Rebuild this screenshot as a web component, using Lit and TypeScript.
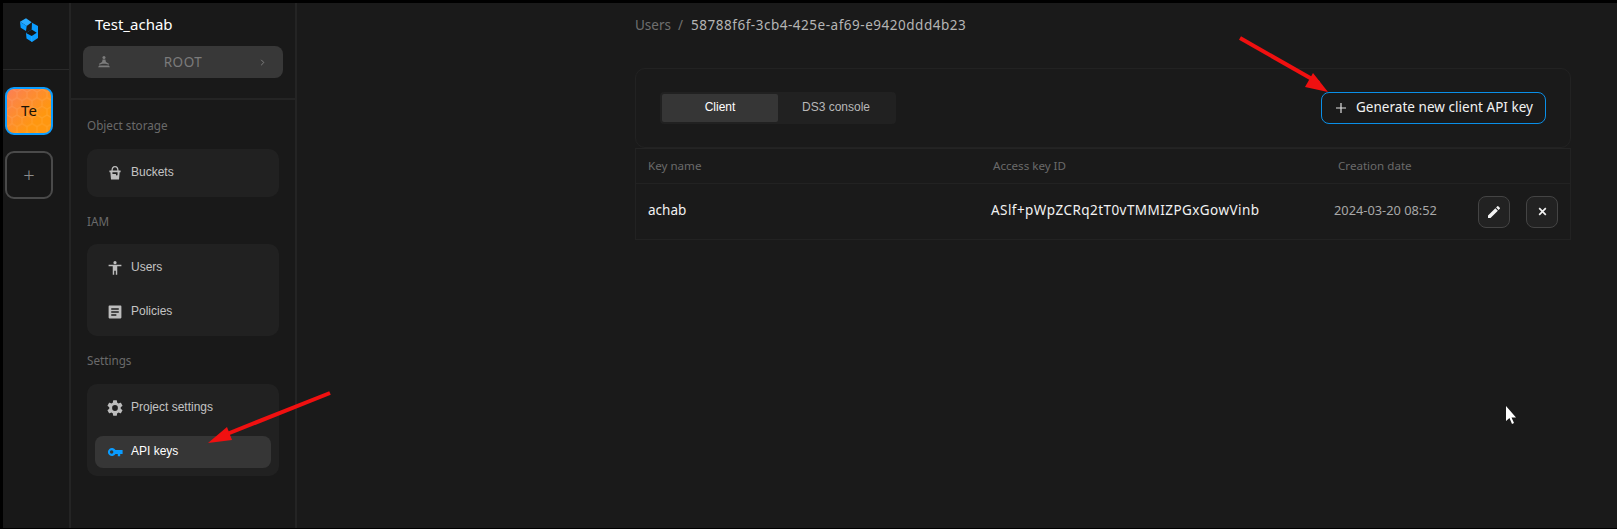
import {LitElement, html, css, svg} from 'lit';
import {customElement} from 'lit/decorators.js';

const icons = {
    bucket: svg`<path d="M6.300 7.500C6.300 3.800 8 2 10 2s3.700 1.800 3.700 5.500" fill="none" stroke="currentColor" stroke-width="1.600"/><path d="M3 6.800h14v2.200h-1.200l-.8 9h-10l-.8-9h-1.200z" fill="currentColor"/><path d="M6.800 9h6.400v3.200a1 1 0 0 1-2 0v-1h-4.400z" fill="#212121"/>`,
    user: svg`<circle cx="10" cy="3.400" r="2" fill="currentColor"/><path d="M2 6h16v1.900h-5.200v10.600h-1.800v-5.200h-2v5.200h-1.800v-10.600h-5.200z" fill="currentColor"/>`,
    policy: svg`<path d="M3 2h14a1 1 0 0 1 1 1v14a1 1 0 0 1-1 1h-14a1 1 0 0 1-1-1v-14a1 1 0 0 1 1-1zM5.300 5.300v1.800h9.400v-1.800zM5.300 9.100v1.800h9.400v-1.800zM5.300 12.900v1.800h6.400v-1.800z" fill="currentColor" fill-rule="evenodd"/>`,
    gear: svg`<path transform="translate(-2 -2)" d="M19.140 12.940c.04-.3.060-.61.060-.94s-.02-.64-.07-.94l2.030-1.580a.5.5 0 0 0 .12-.61l-1.920-3.320a.5.5 0 0 0-.59-.22l-2.390.96a7 7 0 0 0-1.620-.94l-.36-2.540a.48.480 0 0 0-.48-.41h-3.840a.48.480 0 0 0-.47.41l-.36 2.540c-.59.24-1.130.57-1.620.94l-2.390-.96a.49.49 0 0 0-.59.22l-1.920 3.320a.48.480 0 0 0 .12.61l2.030 1.580c-.05.3-.09.63-.09.94s.02.64.07.94l-2.030 1.580a.5.5 0 0 0-.12.61l1.920 3.320c.12.22.37.29.59.22l2.390-.96c.5.380 1.030.7 1.620.94l.36 2.540c.05.24.24.41.48.41h3.840c.24 0 .44-.17.47-.41l.36-2.540c.59-.24 1.130-.56 1.620-.94l2.390.96c.22.080.47 0 .59-.22l1.920-3.320a.48.480 0 0 0-.12-.61zM12 15.600a3.600 3.600 0 1 1 0-7.200 3.600 3.600 0 0 1 0 7.200z" fill="currentColor"/>`,
    key: svg`<path d="M10.600 7.400a5.100 5.100 0 1 0 0 5.200h2.900v2.600h3v-2.600h3v-5.200zM5.800 12.200a2.200 2.200 0 1 1 0-4.400 2.200 2.200 0 0 1 0 4.400z" fill="currentColor" fill-rule="evenodd"/>`,
    root: svg`<circle cx="10" cy="3.500" r="2.200" fill="currentColor"/><path d="M8 6.500h4l.8 3.500 4.200 2.500v1.500l-5-1.500h-4l-5 1.500v-1.500l4.200-2.500zM3 15h14l1.500 2.500h-17z" fill="currentColor"/>`,
    chevron: svg`<path d="M7 4l6 6-6 6" fill="none" stroke="currentColor" stroke-width="2"/>`,
    edit: svg`<path d="M3 17.250v3.750h3.750l11.060-11.060-3.750-3.750zM20.710 7.040a1 1 0 0 0 0-1.410l-2.340-2.340a1 1 0 0 0-1.410 0l-1.830 1.830 3.750 3.750z" fill="currentColor"/>`,
    close: svg`<path d="M4 4l12 12M16 4l-12 12" fill="none" stroke="currentColor" stroke-width="3"/>`,
};

@customElement('app-root')
class AppRoot extends LitElement {
    static styles = css`
    :host {
        display: block;
        position: relative;
        width: 1617px;
        height: 529px;
        box-sizing: border-box;
        padding: 3px 0 1px 3px;
        background: #000;
        overflow: hidden;
        font-family: "Noto Sans", sans-serif;
        color: #fff;
    }

    .page {
        display: flex;
        height: 100%;
        background: #1a1a1a;
    }

    .rail {
        width: 68px;
        flex: none;
        box-sizing: border-box;
        background: #181818;
        border-right: 2px solid #242424;
    }

    .logo {
        height: 67px;
        box-sizing: border-box;
        padding: 15px 0 0 17px;
        border-bottom: 1px solid #2a2a2a;
    }

    .logo svg { display: block; }

    .tile {
        position: relative;
        width: 48px;
        height: 48px;
        box-sizing: border-box;
        margin: 17px 0 0 2px;
        border-radius: 9px;
        display: flex;
        align-items: center;
        justify-content: center;
        overflow: hidden;
        font-size: 15px;
    }

    .tile span { position: relative; padding-bottom: 2px; }
    .tile svg { position: absolute; left: 0; top: 0; }

    .tile.project {
        border: 2px solid #0a9cff;
        background: linear-gradient(135deg, #fb7f56, #ff9710 70%);
        color: #1a1206;
    }

    .tile.add {
        margin-top: 16px;
        border: 2px solid #4a4a4a;
        color: #8c8c8c;
        font-size: 20px;
        font-weight: 300;
    }

    .side {
        width: 226px;
        flex: none;
        box-sizing: border-box;
        background: #191919;
        border-right: 2px solid #242424;
    }

    .side-head {
        height: 97px;
        box-sizing: border-box;
        padding: 11px 12px 0;
        border-bottom: 2px solid #242424;
    }

    .side-title {
        margin-left: 12px;
        height: 22px;
        line-height: 21px;
        font-size: 15px;
    }

    .root {
        margin-top: 10px;
        height: 32px;
        border-radius: 8px;
        background: #383838;
        display: flex;
        align-items: center;
        padding: 0 14px;
        color: #7b7b7b;
        font-size: 13.500px;
    }

    .root span { flex: 1; text-align: center; letter-spacing: .5px; }
    .root svg { width: 14px; height: 14px; flex: none; }
    .root svg.chevron { width: 9px; height: 9px; margin: 0 2px 0 3px; color: #858585; }

    .side-body { padding: 0 16px; }

    .group-label {
        height: 47px;
        line-height: 49px;
        font-size: 11.700px;
        color: #6a6a6a;
    }

    .group-label.first { height: 49px; line-height: 51px; }
    .group-label.last { height: 48px; line-height: 49px; }

    .card {
        display: flex;
        flex-direction: column;
        gap: 12px;
        background: #212121;
        border-radius: 10px;
        padding: 8px;
    }

    .item {
        height: 32px;
        display: flex;
        align-items: center;
        gap: 8px;
        padding-left: 12px;
        border-radius: 8px;
        font-family: "Liberation Sans", sans-serif;
        font-size: 12px;
        color: #c4c4c4;
    }

    .item span { padding-bottom: 2px; }
    .item svg { width: 16px; height: 16px; color: #bdbdbd; flex: none; }
    .item.active { background: #363636; color: #fff; }
    .item.active svg { color: #0a9cff; }

    .main {
        flex: 1;
        min-width: 0;
        padding: 0 46px 0 338px;
    }

    .crumbs {
        height: 44px;
        line-height: 44px;
        font-size: 13.500px;
        color: #b5b5b5;
    }

    .crumbs span { color: #6f6f6f; }
    .crumbs b { font-weight: 400; color: #6f6f6f; margin: 0 8px 0 7px; }
    .crumbs em { font-style: normal; letter-spacing: .52px; }

    .bar {
        margin-top: 21px;
        height: 80px;
        box-sizing: border-box;
        border: 1px solid #222;
        border-radius: 10px;
        padding: 0 24px;
        display: flex;
        align-items: center;
        justify-content: space-between;
    }

    .tabs {
        display: flex;
        padding: 2px;
        width: 236px;
        box-sizing: border-box;
        background: #212121;
        border-radius: 4px;
        font-family: "Liberation Sans", sans-serif;
        font-size: 12px;
    }

    .tabs div {
        width: 116px;
        height: 28px;
        line-height: 26px;
        text-align: center;
        color: #b8b8b8;
    }

    .tabs .on { background: #363636; color: #fff; border-radius: 2px; }

    .generate {
        width: 225px;
        height: 32px;
        box-sizing: border-box;
        border: 1px solid #0a8fe8;
        border-radius: 8px;
        display: flex;
        align-items: center;
        padding-left: 14px;
        gap: 10px;
        font-size: 13.500px;
        color: #f2f2f2;
    }

    .generate span { padding-bottom: 2px; letter-spacing: .03px; }
    .generate svg { flex: none; }

    .table {
        border: 1px solid #222;
        border-top: 1px solid #242424;
    }

    .row {
        display: grid;
        grid-template-columns: 345px 345px 1fr;
        align-items: center;
        padding-left: 12px;
    }

    .row.head {
        height: 35px;
        box-sizing: border-box;
        padding-bottom: 2px;
        border-bottom: 1px solid #222;
        font-size: 11.600px;
        color: #6a6a6a;
    }

    .row.data {
        height: 55px;
        font-size: 13.500px;
        color: #f2f2f2;
    }

    .name { padding-bottom: 4px; }
    .key { margin-left: -2px; padding-bottom: 4px; letter-spacing: .44px; }

    .date-cell {
        display: flex;
        align-items: center;
        margin-left: -4px;
        font-size: 12.800px;
        color: #a8a8a8;
    }

    .date-cell span { padding-bottom: 3px; }

    .actions { display: flex; gap: 16px; margin-left: auto; margin-right: 12px; }

    .btn {
        width: 32px;
        height: 32px;
        box-sizing: border-box;
        border: 1px solid #444;
        border-radius: 8px;
        background: #222;
        display: flex;
        align-items: center;
        justify-content: center;
        color: #f2f2f2;
    }

    .overlay {
        position: absolute;
        left: 0;
        top: 0;
        pointer-events: none;
    }
    `;

    private icon(body: unknown) {
        return html`<svg viewBox="0 0 20 20">${body}</svg>`;
    }

    render() {
        return html`
            <div class="page">
                <div class="rail">
                    <div class="logo">
                        <svg width="18" height="24" viewBox="0 0 18 24">
                            <path d="M0 3.700L6 .3l5.700 4-5 3.700z" fill="#29aaff"/>
                            <path d="M0 3.700l6.700 4.300-.7 5-5.300-3.300z" fill="#0a9cff"/>
                            <path d="M12 4.700l6 3.300v12l-6 4-5.500-3.500-.5-5.500 5.700-3.500z" fill="#0a9cff"/>
                            <path d="M6 15l5.700-3.500 5 3.200-5 3.300z" fill="#141414"/>
                            <path d="M11.700 18v5.500" stroke="#29aaff" stroke-width=".8"/>
                        </svg>
                    </div>
                    <div class="tile project">
                        <svg width="44" height="44">
                            <defs>
                                <pattern id="hex" width="10" height="17.300" patternUnits="userSpaceOnUse">
                                    <path d="M5 0l5 2.900v5.800l-5 2.900-5-2.900v-5.800zM5 11.600v5.700" fill="none" stroke="#fff" stroke-opacity=".1"/>
                                </pattern>
                            </defs>
                            <rect width="44" height="44" fill="url(#hex)"/>
                        </svg>
                        <span>Te</span>
                    </div>
                    <div class="tile add"><span>+</span></div>
                </div>
                <div class="side">
                    <div class="side-head">
                        <div class="side-title">Test_achab</div>
                        <div class="root">
                            ${this.icon(icons.root)}
                            <span>ROOT</span>
                            <svg class="chevron" viewBox="0 0 20 20">${icons.chevron}</svg>
                        </div>
                    </div>
                    <div class="side-body">
                        <div class="group-label first">Object storage</div>
                        <div class="card">
                            <div class="item">${this.icon(icons.bucket)}<span>Buckets</span></div>
                        </div>
                        <div class="group-label">IAM</div>
                        <div class="card">
                            <div class="item">${this.icon(icons.user)}<span>Users</span></div>
                            <div class="item">${this.icon(icons.policy)}<span>Policies</span></div>
                        </div>
                        <div class="group-label last">Settings</div>
                        <div class="card">
                            <div class="item">${this.icon(icons.gear)}<span>Project settings</span></div>
                            <div class="item active">${this.icon(icons.key)}<span>API keys</span></div>
                        </div>
                    </div>
                </div>
                <div class="main">
                    <div class="crumbs"><span>Users</span><b>/</b><em>58788f6f-3cb4-425e-af69-e9420ddd4b23</em></div>
                    <div class="bar">
                        <div class="tabs">
                            <div class="on">Client</div>
                            <div>DS3 console</div>
                        </div>
                        <div class="generate">
                            <svg width="10" height="10" viewBox="0 0 10 10"><path d="M5 0v10M0 5h10" stroke="#e0e0e0" stroke-width="1.200"/></svg>
                            <span>Generate new client API key</span>
                        </div>
                    </div>
                    <div class="table">
                        <div class="row head">
                            <div>Key name</div>
                            <div>Access key ID</div>
                            <div>Creation date</div>
                        </div>
                        <div class="row data">
                            <div class="name">achab</div>
                            <div class="key">ASlf+pWpZCRq2tT0vTMMIZPGxGowVinb</div>
                            <div class="date-cell">
                                <span>2024-03-20 08:52</span>
                                <div class="actions">
                                    <div class="btn"><svg width="16" height="16" viewBox="0 0 24 24">${icons.edit}</svg></div>
                                    <div class="btn"><svg width="11" height="11" viewBox="0 0 20 20">${icons.close}</svg></div>
                                </div>
                            </div>
                        </div>
                    </div>
                </div>
            </div>
            <svg class="overlay" width="1617" height="529" viewBox="0 0 1617 529">
                <path d="M1240 38L1319 83" stroke="#f01010" stroke-width="4"/>
                <path d="M1328 92L1313 73L1305 87z" fill="#f01010"/>
                <path d="M330 393L222 436" stroke="#f01010" stroke-width="4"/>
                <path d="M208 443L227 427L232 440z" fill="#f01010"/>
                <path d="M1506 406v15l3.500-3 2.500 6 2-1-2.500-5.500h4.500z" fill="#fff"/>
            </svg>
        `;
    }
}
